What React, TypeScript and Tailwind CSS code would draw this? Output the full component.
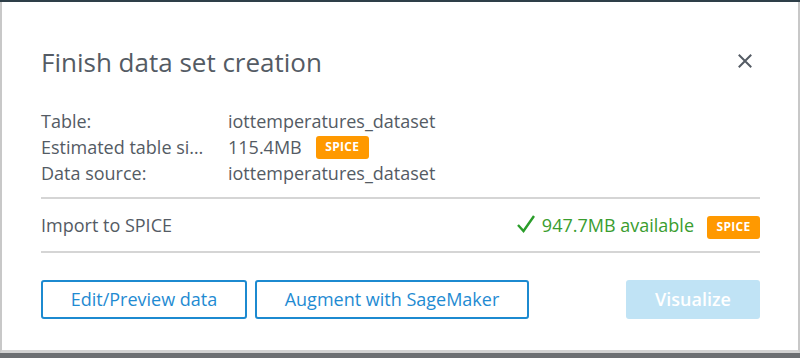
import React from 'react';

const font = { fontFamily: '"Open Sans", "Noto Sans", sans-serif' };

const SpiceBadge: React.FC = () => (
  <span className="inline-flex items-center justify-center h-[23px] w-[53px] rounded-[3px] bg-[#ff9900] text-white text-[12px] font-bold tracking-[0.3px]">
    SPICE
  </span>
);

const App: React.FC = () => {
  return (
    <div className="w-[800px] h-[358px] flex flex-col bg-[#6c6f72]" style={font}>
      <div className="h-[2px] bg-[#2e3f48]"></div>
      <div className="h-[351px] bg-white border-l-2 border-r-2 border-[#c8c8c8] border-b-[3px] border-b-[#d2d2d2] pl-[39px] pr-[38px] flex flex-col text-[#545b64]">
        <div className="flex items-center justify-between pt-[44px]">
          <h1 className="text-[26px] leading-[32px] text-[#545b64]">Finish data set creation</h1>
          <button className="mr-[8px] mt-[-2px]">
            <svg width="14" height="14" viewBox="0 0 14 14">
              <path d="M1.5 1.5 L12.5 12.5 M12.5 1.5 L1.5 12.5" stroke="#545b64" strokeWidth="2" strokeLinecap="square" />
            </svg>
          </button>
        </div>

        <div className="mt-[30px] grid grid-cols-[187px_1fr] text-[18px] leading-[26px]">
          <div>Table:</div>
          <div>iottemperatures_dataset</div>
          <div title="Estimated table size:">Estimated table si…</div>
          <div className="flex items-center gap-[14px]">
            <span>115.4MB</span>
            <SpiceBadge />
          </div>
          <div>Data source:</div>
          <div>iottemperatures_dataset</div>
        </div>

        <div className="mt-[11px] border-t-2 border-[#d5d5d5] border-b-2 h-[56px] flex items-center justify-between text-[18px]">
          <span>Import to SPICE</span>
          <div className="flex items-center">
            <svg width="20" height="20" viewBox="0 0 20 20" className="mr-[6px] mb-[3px]">
              <path d="M2 11 L7.5 17 L18 2" fill="none" stroke="#2a9d2a" strokeWidth="2.4" />
            </svg>
            <span className="text-[#3a9d2f]">947.7MB available</span>
            <span className="ml-[13px]">
              <SpiceBadge />
            </span>
          </div>
        </div>

        <div className="mt-[27px] flex items-center text-[18px]">
          <button className="h-[39px] w-[206px] rounded-[3px] border-2 border-[#1c8ad0] text-[#1f8bd2]">
            Edit/Preview data
          </button>
          <button className="ml-[8px] h-[39px] w-[274px] rounded-[3px] border-2 border-[#1c8ad0] text-[#1f8bd2]">
            Augment with SageMaker
          </button>
          <button className="ml-auto h-[39px] w-[134px] rounded-[3px] bg-[#c0e3f5] text-white font-semibold">
            Visualize
          </button>
        </div>
      </div>
    </div>
  );
};

export default App;
